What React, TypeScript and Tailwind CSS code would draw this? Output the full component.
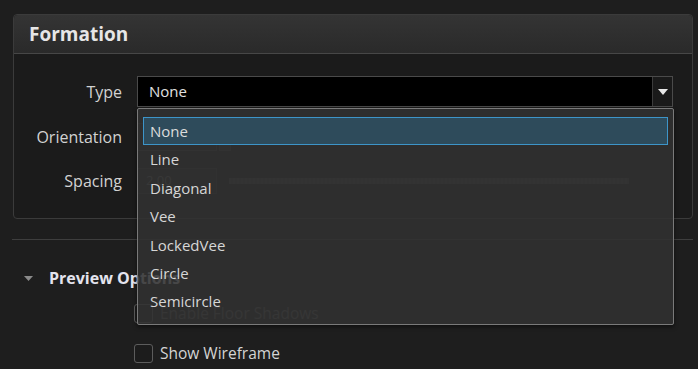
const options = ["None", "Line", "Diagonal", "Vee", "LockedVee", "Circle", "Semicircle"];

function Checkbox({ label, disabled }: { label: string; disabled?: boolean }) {
  return (
    <div className="flex items-center gap-[7px] pl-[121px] h-[19px]">
      <div className="w-[19px] h-[19px] rounded-[3px] border border-[#5c5c5c] bg-[#1c1c1c]" />
      <span className={disabled ? "text-[15.5px] text-[#5a5a5a]" : "text-[15.5px] text-[#d4d4d4]"}>{label}</span>
    </div>
  );
}

export default function App() {
  return (
    <div
      className="relative w-[698px] h-[369px] overflow-hidden bg-[#1e1e1e] pt-[14px] pl-[13px] pr-[5px]"
      style={{ fontFamily: '"Open Sans", "Noto Sans", sans-serif' }}
    >
      {/* Formation panel */}
      <div className="h-[205px] rounded-[4px] border border-[#3b3b3b] bg-[#1b1b1b]">
        <div className="h-[39px] flex items-center pl-[15px] rounded-t-[4px] border-b border-[#474747] bg-gradient-to-b from-[#343434] to-[#2a2a2a]">
          <span className="text-[19px] font-bold text-[#e6e6e6]">Formation</span>
        </div>

        <div className="flex flex-col pt-[22px]">
          {/* Type */}
          <div className="flex items-center h-[31px]">
            <span className="w-[108px] text-right text-[16px] text-[#d2d2d2]">Type</span>
            <div className="ml-[15px] w-[536px] h-[31px] flex border border-[#4a4a4a] bg-black">
              <span className="flex-1 flex items-center pl-[11px] text-[15px] text-[#e0e0e0]">None</span>
              <div className="w-[20px] flex items-center justify-center border-l border-[#3c3c3c] bg-[#1a1a1a]">
                <svg width="10" height="6" viewBox="0 0 10 6">
                  <path d="M0 0 H10 L5 6 Z" fill="#e8e8e8" />
                </svg>
              </div>
            </div>
          </div>

          {/* Orientation (under the open list) */}
          <div className="flex items-center h-[30px] mt-[15px]">
            <span className="w-[108px] text-right text-[16px] text-[#d2d2d2]">Orientation</span>
            <div className="ml-[15px] flex gap-[2px] h-[28px]">
              <div className="w-[80px] border border-[#3e3e3e] bg-[#232323]" />
              <div className="w-[12px] border border-[#3e3e3e] bg-[#2a2a2a]" />
            </div>
          </div>

          {/* Spacing (under the open list) */}
          <div className="flex items-center h-[28px] mt-[15px]">
            <span className="w-[108px] text-right text-[16px] text-[#d2d2d2]">Spacing</span>
            <div className="ml-[15px] flex items-center gap-[12px]">
              <div className="w-[80px] h-[26px] flex items-center pl-[8px] border border-[#333] bg-[#222] text-[13px] text-[#6a6a6a]">2.00</div>
              <div className="w-[400px] h-[6px] bg-[repeating-linear-gradient(90deg,#464646_0px,#464646_2px,#383838_2px,#383838_4px)]" />
            </div>
          </div>
        </div>
      </div>

      <div className="mt-[20px] h-px bg-[#3e3e3e] -ml-[1px]" />

      {/* Preview Options */}
      <div className="mt-[26px] flex items-center h-[24px]">
        <svg width="9" height="5" viewBox="0 0 9 5" className="ml-[11px]">
          <path d="M0 0 H9 L4.5 5 Z" fill="#8a8a8a" />
        </svg>
        <span className="ml-[16px] text-[16px] font-bold text-[#e4e4ee]">Preview Options</span>
      </div>

      <div className="mt-[14px] flex flex-col gap-[21px]">
        <Checkbox label="Enable Floor Shadows" disabled />
        <Checkbox label="Show Wireframe" />
      </div>

      {/* Open dropdown list */}
      <div className="absolute left-[137px] top-[108px] w-[537px] h-[217px] rounded-[2px] border border-[#7a7a7a] bg-[#313131]/[0.88] pt-[8px] px-[5px] shadow-[0_2px_4px_rgba(0,0,0,0.5)]">
        {options.map((o, i) => (
          <div
            key={o}
            className={
              i === 0
                ? "h-[28.4px] flex items-center pl-[6px] border border-[#3d95c9] bg-[#2e4b5b] text-[15px] text-[#dcdcdc]"
                : "h-[28.4px] flex items-center pl-[7px] text-[15px] text-[#d6d6d6]"
            }
          >
            {o}
          </div>
        ))}
      </div>
    </div>
  );
}
